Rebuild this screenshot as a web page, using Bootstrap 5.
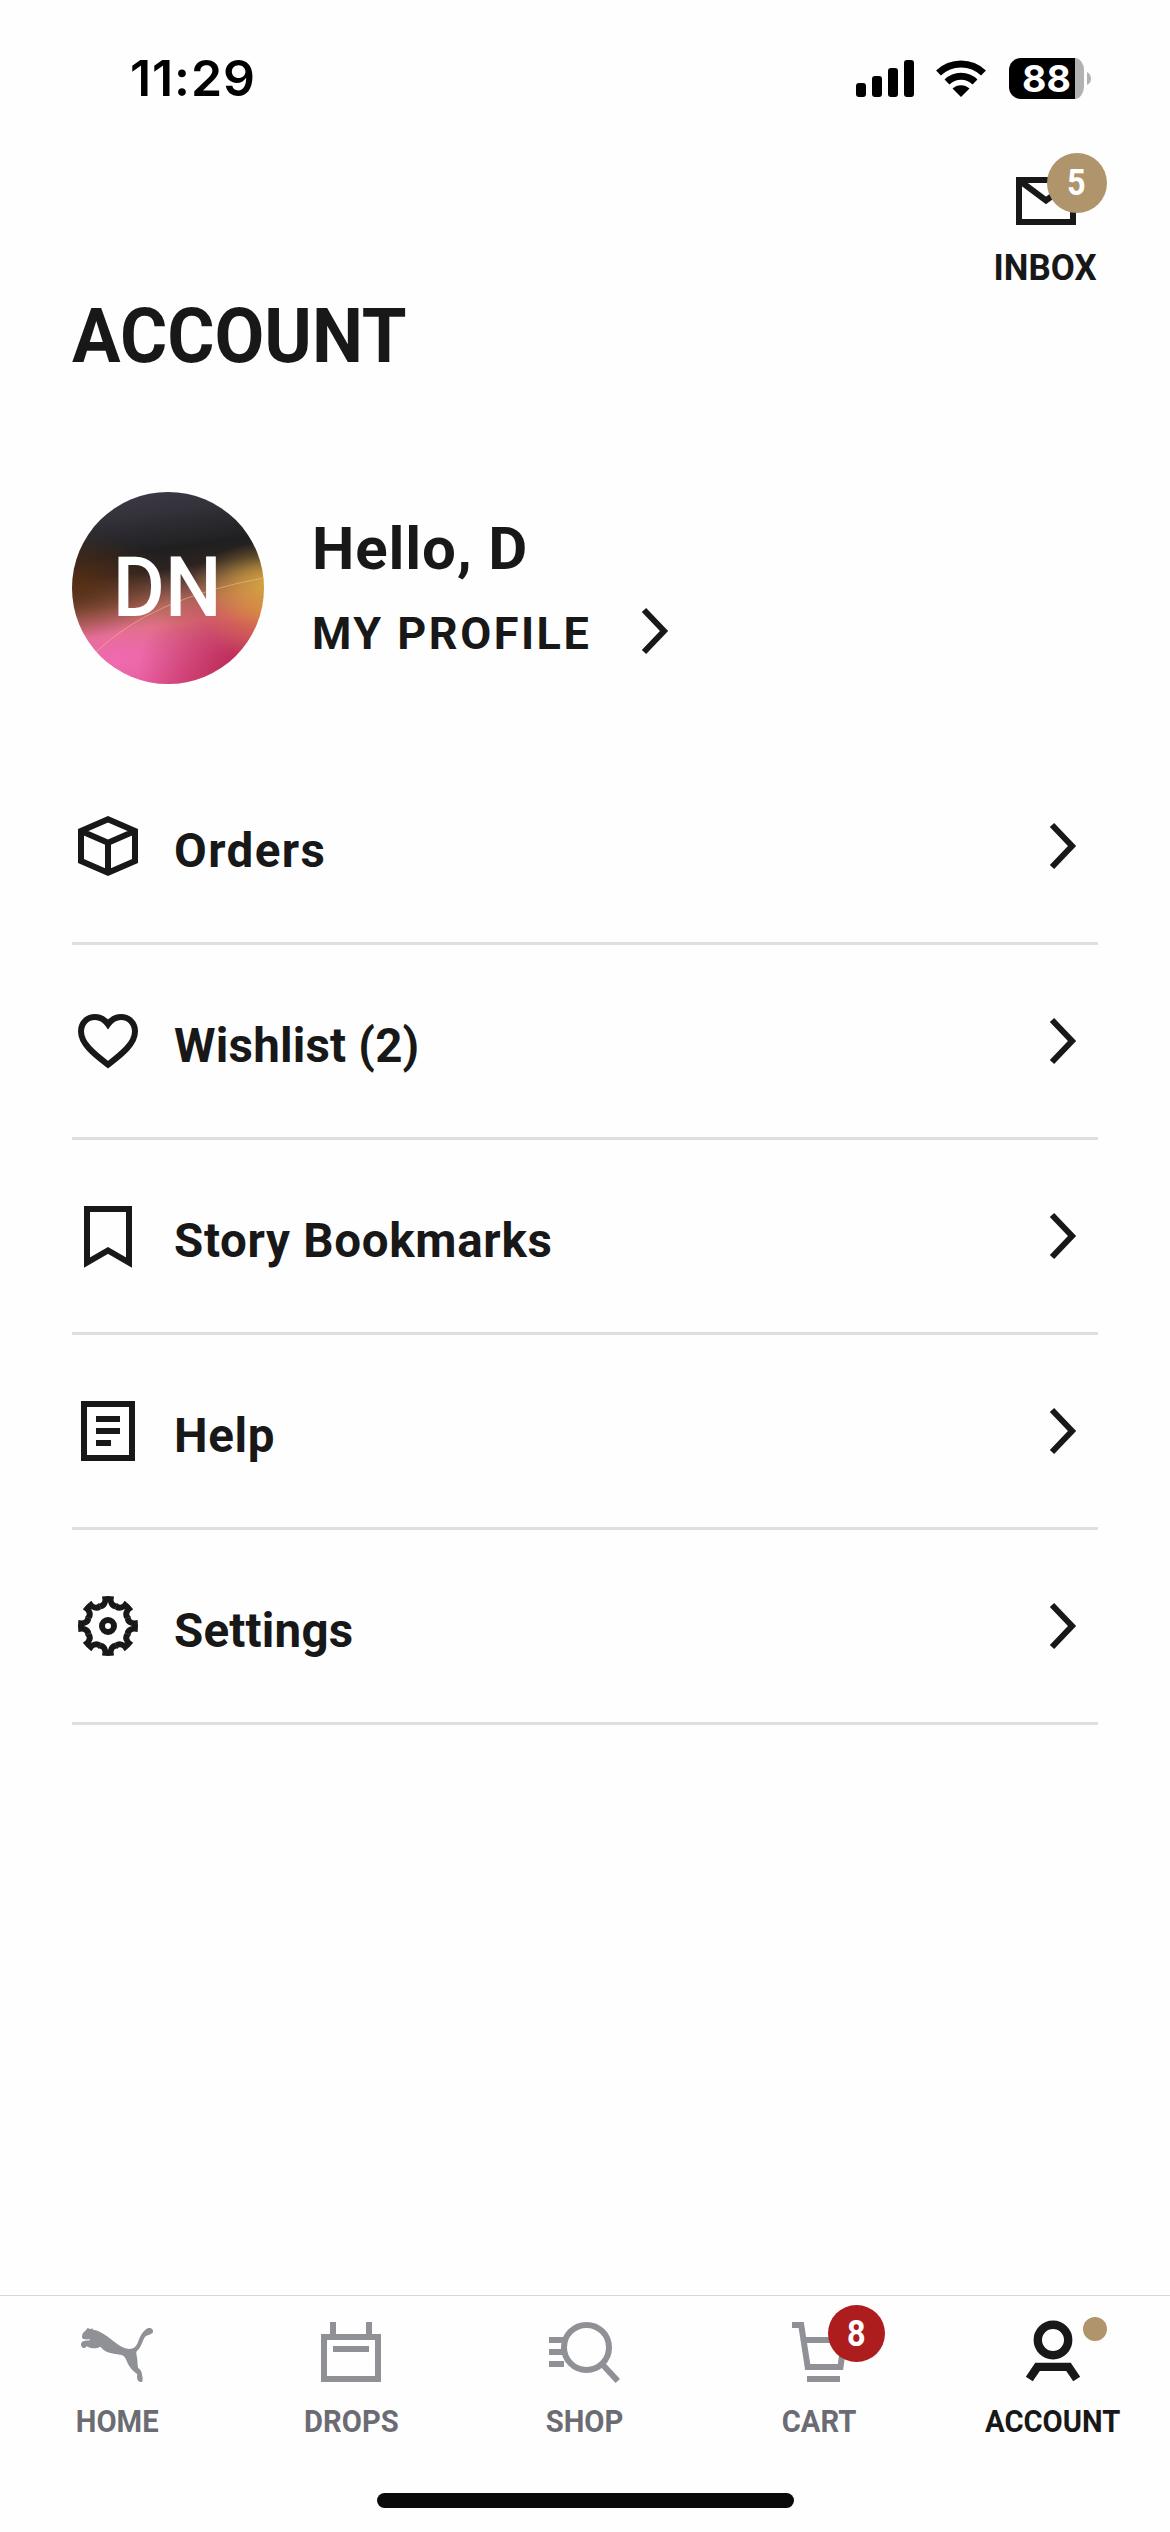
<!DOCTYPE html>
<html lang="en">
<head>
<meta charset="utf-8">
<meta name="viewport" content="width=device-width, initial-scale=1">
<title>Account</title>
<link href="https://cdn.jsdelivr.net/npm/bootstrap@5.3.0/dist/css/bootstrap.min.css" rel="stylesheet">
<style>
body{background:#fefefe;color:#181818;font-family:Roboto,"Liberation Sans",sans-serif;font-weight:700}
svg{display:block;overflow:visible;flex:none}
.ln{fill:none;stroke:currentColor;stroke-width:6}
.screen{height:2532px;width:1170px;overflow:hidden}
.status{height:156px;padding:0 79px 0 130px;color:#000;font-family:Inter,sans-serif}
.clock{font-size:50px;font-weight:600;line-height:60px;letter-spacing:.9px;white-space:nowrap}
.wifi{margin-left:22px}
.battery{margin-left:23px}
.topbar{height:134px;padding:21px 72px 0}
.inbox{width:105px}
.inbox-label{font-size:36px;line-height:36px;margin-top:25px;transform:scaleX(.97);white-space:nowrap}
.count{font-size:36px;line-height:1;color:#fff}
.count-inbox{width:60px;height:60px;left:31px;top:-24px;background:#b0956c}
.count-cart{width:57px;height:57px;left:45px;top:-17px;background:#ae1d1e}
.count span{transform:scaleX(.9)}
.dot{width:24px;height:24px;left:66px;top:-5px;background:#b0956c}
.title{font-size:75.5px;line-height:90px;font-weight:700;margin:1px 72px 0;transform:scaleX(.957);transform-origin:0 50%;white-space:nowrap}
.profile{margin:111px 72px 0}
.avatar{width:192px;height:192px;color:#fff;background:
radial-gradient(ellipse 80px 42px at 104% 48%,rgba(214,170,64,.95),rgba(215,140,60,0)),
radial-gradient(ellipse 60px 50px at 100% 62%,rgba(218,130,58,.8),rgba(215,120,60,0)),
radial-gradient(ellipse 95px 54px at 0 49%,rgba(92,48,20,.95),rgba(96,48,22,0)),
radial-gradient(ellipse 110px 85px at 92% 92%,#b8254e,rgba(190,35,80,0)),
radial-gradient(ellipse 100px 52px at 23% 87%,#f06ab0,rgba(240,95,170,0)),
linear-gradient(172deg,#403b49 0,#34323b 14%,#201f20 32%,#2b2320 41%,#65443a 48%,#b0655a 57%,#db7479 67%,#df6496 80%,#de4488 100%)}
.arc{left:0;top:0}
.initials{font-size:84px;font-weight:500;line-height:1;transform:scaleX(.95);margin:-1px 2px 0 0}
.who{margin-left:48px;padding-top:22px}
.hello{font-size:60px;line-height:70px;letter-spacing:.9px;white-space:nowrap}
.mine{font-size:45px;line-height:60px;margin-top:20px;letter-spacing:2.5px;white-space:nowrap}
.mine svg{margin:-6px 0 0 51px}
.menu{margin:66px 72px 0}
.menu-row{height:195px;border-bottom:3px solid #dfdfdf;padding:0 22px 0 6px;color:inherit}
.menu-text{font-size:47.5px;line-height:60px;margin-left:36px;padding-top:9px;white-space:nowrap}
.wide{letter-spacing:1.4px}
.semi{letter-spacing:.7px}
.slight{letter-spacing:.2px}
.tabs{height:237px;border-top:1px solid #d6d6d9;color:#8f9197}
.tab{width:234px;padding-top:26px}
.tab-label{font-size:30.5px;line-height:30px;margin-top:24px;transform:scaleX(.957);color:#6b6c73;white-space:nowrap}
.tab.on,.tab.on .tab-label{color:#181818}
.tab-row{height:197px}
.indicator{width:417px;height:15px;background:#0a0a0a}
</style>
<script src="https://cdn.jsdelivr.net/npm/bootstrap@5.3.0/dist/js/bootstrap.bundle.min.js"></script>
</head>
<body>
<div class="screen d-flex flex-column">
<div class="status d-flex align-items-center justify-content-between">
<span class="clock">11:29</span>
<div class="d-flex align-items-center">
<svg width="58" height="37"><rect y="23" width="10" height="14" rx="3"/><rect x="16" y="16" width="10" height="21" rx="3"/><rect x="32" y="8" width="10" height="29" rx="3"/><rect x="48" width="10" height="37" rx="3"/></svg>
<svg class="wifi" width="50" height="37" viewBox="0 0 50 37"><g fill="none" stroke="#000" stroke-width="7"><path d="M2.500 13A32.500 32.500 0 0 1 47.500 13"/><path d="M11 22A20 20 0 0 1 39 22"/></g><path d="M16.500 28.500A12.500 12.500 0 0 1 33.500 28.500L25 37Z"/></svg>
<svg class="battery" width="82" height="41" viewBox="0 0 82 41"><path d="M12 0H66V41H12A12 12 0 0 1 0 29V12A12 12 0 0 1 12 0Z"/><path fill="#b2b2b2" d="M66 0A9.500 12 0 0 1 75 12V29A9.500 12 0 0 1 66 41ZM78 14Q82 16 82 20.500T78 27Z"/><text x="37.500" y="34" text-anchor="middle" font-size="37.500" font-weight="700" fill="#fff">88</text></svg>
</div>
</div>
<header class="topbar d-flex justify-content-end">
<div class="inbox d-flex flex-column align-items-center">
<div class="position-relative"><svg width="60" height="48"><rect class="ln" x="3" y="3" width="54" height="42"/><path class="ln" d="M4 4L30 23.500L56 4"/></svg>
<span class="count count-inbox rounded-circle position-absolute d-flex align-items-center justify-content-center"><span>5</span></span></div>
<div class="inbox-label">INBOX</div>
</div>
</header>
<h1 class="title">ACCOUNT</h1>
<section class="profile d-flex">
<div class="avatar rounded-circle overflow-hidden position-relative d-flex align-items-center justify-content-center">
<svg class="arc position-absolute" width="192" height="192"><path d="M24 160Q80 106 192 86" fill="none" stroke="#f3bd8c" stroke-opacity=".6"/></svg><span class="initials position-relative">DN</span></div>
<div class="who">
<div class="hello">Hello, D</div>
<div class="mine d-flex align-items-center"><span>MY PROFILE</span><svg width="26" height="46"><path class="ln" d="M2 2L22 23L2 44"/></svg></div>
</div>
</section>
<nav class="menu">
<a class="menu-row d-flex align-items-center text-decoration-none"><svg width="60" height="60"><path class="ln" d="M30 3.300L57 15V45L30 56.700L3 45V15ZM3 15L30 26.700L57 15M30 26.700V56"/></svg><span class="menu-text wide">Orders</span><svg class="ms-auto" width="26" height="46"><path class="ln" d="M2 2L22 23L2 44"/></svg></a>
<a class="menu-row d-flex align-items-center text-decoration-none"><svg width="60" height="60"><path class="ln" transform="translate(0 3)" d="M30 50.700C17 40.500 3 30 3 17.500C3 9 9 3 17 3C22.500 3 27 6 30 10.300C33 6 37.500 3 43 3C51 3 57 9 57 17.500C57 30 43 40.500 30 50.700Z"/></svg><span class="menu-text slight">Wishlist (2)</span><svg class="ms-auto" width="26" height="46"><path class="ln" d="M2 2L22 23L2 44"/></svg></a>
<a class="menu-row d-flex align-items-center text-decoration-none"><svg width="60" height="60"><path class="ln" d="M9 3H51V56.500L30 44.500L9 56.500Z"/></svg><span class="menu-text semi">Story Bookmarks</span><svg class="ms-auto" width="26" height="46"><path class="ln" d="M2 2L22 23L2 44"/></svg></a>
<a class="menu-row d-flex align-items-center text-decoration-none"><svg width="60" height="60"><path class="ln" d="M6 3H54V57H6ZM18 18H42M18 30H42M18 42H33"/></svg><span class="menu-text semi">Help</span><svg class="ms-auto" width="26" height="46"><path class="ln" d="M2 2L22 23L2 44"/></svg></a>
<a class="menu-row d-flex align-items-center text-decoration-none"><svg width="60" height="60" viewBox="-30 -30 60 60" fill="currentColor"><defs><path id="tooth" d="M-6 -29.600Q0 -30.400 6 -29.600L5.500 -26Q6 -22.400 9.500 -22.600L7 -16.800Q1.500 -17.500 0 -24Q-1.500 -17.500 -7 -16.800L-9.500 -22.600Q-6 -22.400 -5.500 -26Z"/></defs><use href="#tooth"/><use href="#tooth" transform="rotate(45)"/><use href="#tooth" transform="rotate(90)"/><use href="#tooth" transform="rotate(135)"/><use href="#tooth" transform="rotate(180)"/><use href="#tooth" transform="rotate(225)"/><use href="#tooth" transform="rotate(270)"/><use href="#tooth" transform="rotate(315)"/><circle class="ln" r="6"/></svg><span class="menu-text slight">Settings</span><svg class="ms-auto" width="26" height="46"><path class="ln" d="M2 2L22 23L2 44"/></svg></a>
</nav>
<footer class="tabs mt-auto flex-shrink-0">
<div class="tab-row d-flex">
<div class="tab d-flex flex-column align-items-center"><svg width="72" height="61" viewBox="243 126 216 183"><path fill="currentColor" d="M246 169Q246 160 252 156Q258 151 262 145Q265 142 268 147L275 146Q277 143 279 149C300 152 318 165 336 180C354 194 368 205 386 207C404 207 409 199 415 184C421 168 428 153 443 145C452 141 461 148 459 156C456 164 444 164 437 169C428 178 426 196 416 208C411 213 408 215 409 222C413 235 412 251 414 263C422 269 426 276 426 284Q430 295 427 305Q418 308 413 301Q409 292 412 283C400 274 391 265 384 252C379 240 376 230 366 225C350 221 327 222 310 209L301 200C292 205 281 206 270 203C262 202 257 196 258 201Q256 205 250 204Q242 200 243 191Q246 182 256 182L270 181Q272 177 266 178Q256 179 250 177Q245 175 246 169Z"/></svg><div class="tab-label">HOME</div></div>
<div class="tab d-flex flex-column align-items-center"><svg width="72" height="61"><path class="ln" d="M9 15H63V57H9ZM18 0V12M54 0V12M18 27H54"/></svg><div class="tab-label">DROPS</div></div>
<div class="tab d-flex flex-column align-items-center"><svg width="72" height="61"><path class="ln" d="M0 18H15M0 30H13M0 42H15M53.500 42.500L68.800 59"/><circle class="ln" cx="37.500" cy="25.400" r="22.500"/></svg><div class="tab-label">SHOP</div></div>
<div class="tab d-flex flex-column align-items-center"><div class="position-relative"><svg width="72" height="61"><path class="ln" d="M9 3H18.200L24.700 45H57.500L61 18H21M24 57H57"/></svg><span class="count count-cart rounded-circle position-absolute d-flex align-items-center justify-content-center"><span>8</span></span></div><div class="tab-label">CART</div></div>
<div class="tab on d-flex flex-column align-items-center"><div class="position-relative"><svg width="72" height="61"><g fill="none" stroke="currentColor" stroke-width="8.400"><circle cx="36" cy="18" r="15.200"/><path d="M12.300 57L20.500 44.900H51.500L59.700 57"/></g></svg><span class="dot position-absolute rounded-circle"></span></div><div class="tab-label">ACCOUNT</div></div>
</div>
<div class="indicator rounded-pill mx-auto"></div>
</footer>
</div>
</body>
</html>
